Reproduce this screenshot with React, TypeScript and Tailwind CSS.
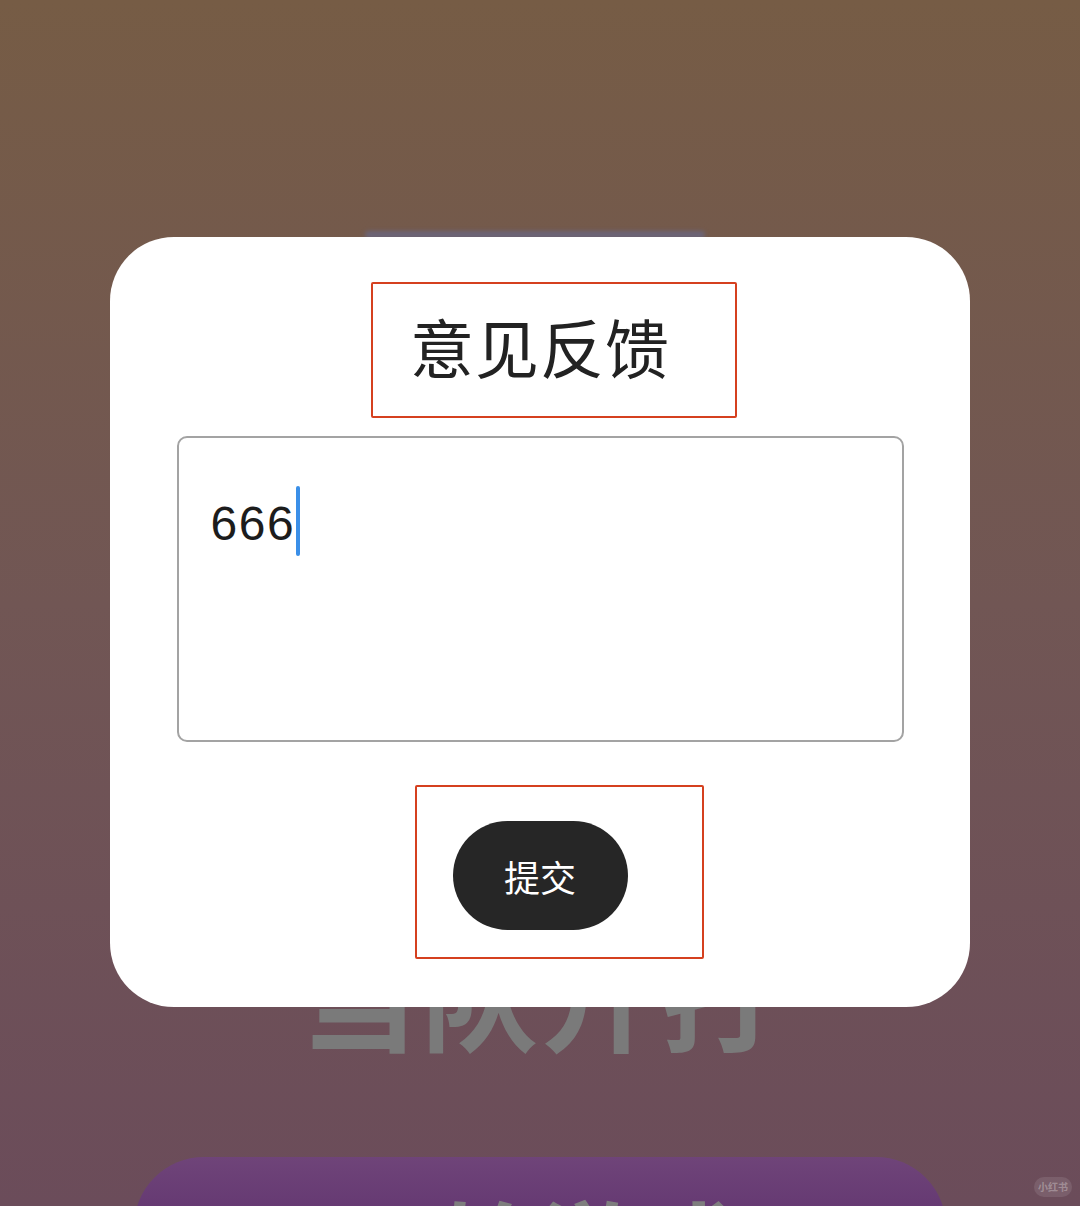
import React from "react";

const cjk = { fontFamily: '"Noto Sans CJK SC", "Noto Sans", sans-serif' };

function FeedbackDialog() {
  return (
    <div className="absolute left-[110px] top-[237px] w-[860px] h-[770px] rounded-[64px] bg-white flex flex-col items-center">
      {/* title */}
      <div
        className="mt-[68px] h-[80px] leading-[80px] text-[64px] text-[#222222] tracking-[1px]"
        style={cjk}
      >
        意见反馈
      </div>

      {/* text input */}
      <div className="mt-[51px] w-[727px] h-[306px] rounded-[10px] border-2 border-[#a3a3a3] pl-[32px] pt-[48px]">
        <div className="flex items-center h-[70px]">
          <span
            className="text-[48px] leading-none text-[#1c1c1c] tracking-[1.5px] mt-[6px]"
            style={{ fontFamily: '"Liberation Sans", Arial, sans-serif' }}
          >
            666
          </span>
          <span className="ml-[1px] w-[4px] h-[70px] rounded-full bg-[#3a8fe8]" />
        </div>
      </div>

      {/* submit */}
      <button
        className="mt-[79px] w-[175px] h-[109px] rounded-full bg-[#262626] text-white text-[36px] leading-none flex items-center justify-center"
        style={cjk}
      >
        提交
      </button>

      {/* highlight frames */}
      <div className="absolute left-[261px] top-[45px] w-[366px] h-[136px] border-[2.5px] border-[#d5401f] rounded-[2px]" />
      <div className="absolute left-[305px] top-[548px] w-[289px] h-[174px] border-[2.5px] border-[#d5401f] rounded-[2px]" />
    </div>
  );
}

export default function App() {
  return (
    <div className="relative w-[1080px] h-[1206px] overflow-hidden bg-gradient-to-b from-[#765c45] via-[#715654] to-[#6b4c5a]">
      {/* page content under the dialog */}
      <div className="flex flex-col items-center pt-[934px]">
        <div
          className="h-[115px] leading-[115px] text-[118px] font-bold text-[#7a7a7a] tracking-[2px]"
          style={cjk}
        >
          当队开打
        </div>
        <div className="mt-[108px] w-[812px] h-[140px] rounded-[110px] bg-gradient-to-b from-[#6f4479] to-[#552767] flex justify-center pt-[36px]">
          <span
            className="text-[100px] leading-none font-bold text-[#7e7e7e]"
            style={cjk}
          >
            开始游戏
          </span>
        </div>
      </div>

      {/* faint bar peeking above the dialog */}
      <div className="absolute left-[365px] top-[231px] w-[340px] h-[8px] rounded-full bg-[#6b6478] blur-[2px]" />

      <FeedbackDialog />

      {/* watermark */}
      <div className="absolute right-[8px] bottom-[9px] w-[38px] h-[20px] rounded-full bg-white/10 flex items-center justify-center">
        <span className="text-[10px] leading-none text-white/30 font-bold" style={cjk}>
          小红书
        </span>
      </div>
    </div>
  );
}
